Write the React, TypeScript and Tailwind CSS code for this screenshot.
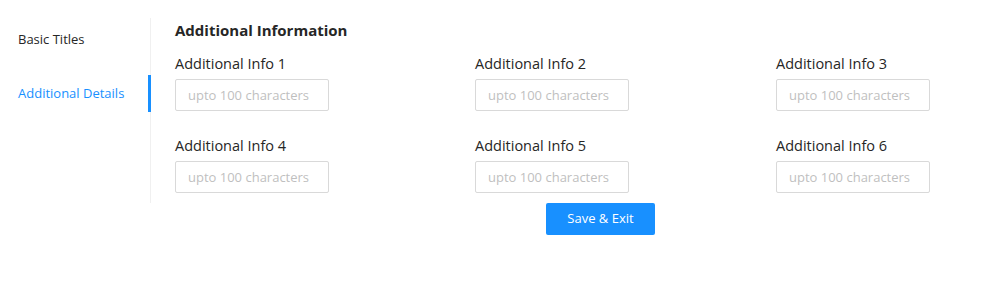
import React from "react";

const F = { fontFamily: '"Open Sans", "Liberation Sans", sans-serif' };

function Field({ n }: { n: number }) {
  return (
    <div className="flex flex-col">
      <div className="text-[14.5px] leading-[20px] text-[#262626] h-[20px] mb-[5px]">Additional Info {n}</div>
      <input
        placeholder="upto 100 characters"
        className="w-[154px] h-[32px] border border-[#d9d9d9] rounded-[2px] px-[12px] text-[13px] text-[#262626] placeholder:text-[#bfbfbf] outline-none"
      />
    </div>
  );
}

export default function App() {
  return (
    <div className="w-[981px] h-[281px] bg-white flex pt-[18px]" style={F}>
      <div className="w-[151px] h-[185px] border-r border-[#f0f0f0] flex flex-col pt-[3px]">
        <div className="h-[37px] pl-[18px] flex items-center text-[13px] text-[#262626]">Basic Titles</div>
        <div className="h-[17px]" />
        <div className="h-[37px] pl-[18px] flex items-center text-[13px] text-[#1890ff] border-r-[3px] border-[#1890ff] -mr-[1px]">Additional Details</div>
      </div>
      <div className="flex flex-col pl-[24px]">
        <div className="text-[15px] font-bold text-[#262626] leading-[24px]">Additional Information</div>
        <div className="grid grid-cols-[300px_301px_154px] gap-y-[25px] mt-[12px]">
          {[1, 2, 3, 4, 5, 6].map((n) => (
            <Field key={n} n={n} />
          ))}
        </div>
        <div className="mt-[10px] ml-[371px]">
          <button className="w-[109px] h-[32px] bg-[#1890ff] text-white text-[13px] rounded-[2px]">Save &amp; Exit</button>
        </div>
      </div>
    </div>
  );
}
